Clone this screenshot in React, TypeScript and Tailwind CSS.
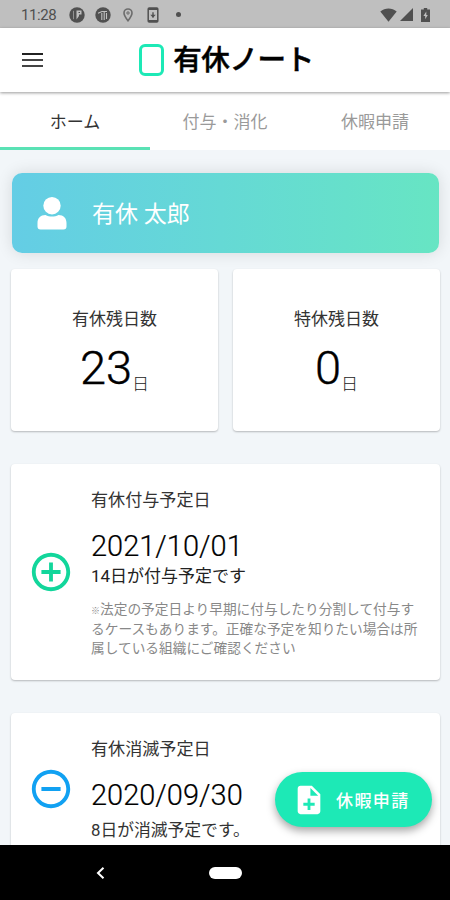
import React from 'react';
import { MdAddCircleOutline, MdNoteAdd, MdRemoveCircleOutline } from 'react-icons/md';

const StatusBar: React.FC = () => (
  <div className="h-7 shrink-0 bg-[#bfbfbf] text-[#505050] flex items-center justify-between pl-[21px] pr-[20px] pt-px">
    <div className="flex items-center">
      <span className="w-[48px] text-[15px] leading-none tracking-[-0.4px] pt-px">11:28</span>
      <svg className="w-4 h-4" viewBox="0 0 16 16">
        <circle cx="8" cy="8" r="7.7" fill="currentColor" />
        <path d="M4.5 3.8v8.4" stroke="#bfbfbf" strokeWidth="1" opacity=".6" />
        <path d="M7.5 3.5h5v4h-2.5v1.5l-2.5 3.5z" fill="#bfbfbf" />
        <path d="M9.5 5.5h1.5" stroke="currentColor" strokeWidth="1" />
      </svg>
      <svg className="w-4 h-4 ml-[10px]" viewBox="0 0 16 16">
        <circle cx="8" cy="8" r="7.7" fill="currentColor" />
        <path d="M3 6.2l4-1.7h5M6.8 6v7M9.2 5v8M11.5 6v6" stroke="#bfbfbf" strokeWidth="1.1" fill="none" />
      </svg>
      <svg className="w-[10px] h-[14px] ml-[12px]" viewBox="0 0 10 14" fill="none" stroke="currentColor">
        <path d="M5 12.8C2.5 9.6 1 7.3 1 5a4 4 0 0 1 8 0c0 2.3-1.5 4.6-4 7.8z" strokeWidth="1.6" opacity=".75" />
        <circle cx="5" cy="5" r="1.2" opacity=".75" />
      </svg>
      <svg className="w-3 h-4 ml-[14px]" viewBox="0 0 12 16" fill="none" stroke="currentColor">
        <rect x="1.2" y="1" width="9.6" height="14" rx="1" strokeWidth="1.5" />
        <path d="M1 2h10M1 14h10" strokeWidth="2" />
        <path d="M6 5.2v5.4" strokeWidth="1.4" />
        <path d="M3.3 7.8L6 10.8l2.7-3z" fill="currentColor" stroke="none" />
      </svg>
      <span className="w-[5px] h-[5px] rounded-full bg-[#505050] ml-[17px]"></span>
    </div>
    <div className="flex items-center">
      <svg className="w-[17px] h-[14px]" viewBox="0 0 17 14" fill="currentColor">
        <path d="M.3 3.5C5 -.5 12 -.5 16.7 3.5L8.5 13.8z" />
      </svg>
      <svg className="w-[13px] h-[13px] ml-[3px]" viewBox="0 0 13 13" fill="currentColor">
        <path d="M13 0v13H0z" />
      </svg>
      <svg className="w-[9px] h-[14px] ml-[8px]" viewBox="0 0 9 14">
        <path d="M2.8 0h3.4v1.5H9V14H0V1.5h2.8z" fill="currentColor" />
        <path d="M5.3 3.5L2.4 8h1.8v3.2L6.800 7H5.300z" fill="#bfbfbf" />
      </svg>
    </div>
  </div>
);

const Header: React.FC = () => (
  <header className="relative z-10 h-16 shrink-0 bg-white flex items-center justify-between pl-[22px] pr-[19px] shadow-[0_1px_3px_rgba(0,0,0,0.4)]">
    <button className="w-[21px] flex flex-col gap-[4px]">
      <span className="h-[2px] bg-[#222]"></span>
      <span className="h-[2px] bg-[#444]"></span>
      <span className="h-[2px] bg-[#444]"></span>
    </button>
    <h1 className="flex items-center gap-[9px]">
      <span className="w-[25px] h-[32px] rounded-[6px] border-[3.5px] border-[#1de9b6]"></span>
      <span className="pt-[3px] text-[28.5px] leading-none font-medium text-black tracking-[-0.4px] whitespace-nowrap [-webkit-text-stroke:0.5px_#000]">
        有休ノート
      </span>
    </h1>
    <span className="w-[21px]"></span>
  </header>
);

const tabs = [
  { label: 'ホーム', active: true },
  { label: '付与・消化', active: false },
  { label: '休暇申請', active: false },
];

const Tabs: React.FC = () => (
  <nav className="h-[58px] shrink-0 bg-white grid grid-cols-3">
    {tabs.map((tab) => (
      <button
        key={tab.label}
        className={`
          text-[17px] leading-none pt-[5px] border-b-[3px]
          ${tab.active ? 'text-[#333] border-[#5ae2b5]' : 'text-[#9a9a9a] border-transparent'}
        `}
      >
        {tab.label}
      </button>
    ))}
  </nav>
);

interface StatCardProps {
  title: string;
  days: number;
}

const StatCard: React.FC<StatCardProps> = ({ title, days }) => (
  <div className="h-[162px] bg-white rounded-[4px] shadow-[0_1px_2px_rgba(0,0,0,0.25)] flex flex-col items-center pt-[39px]">
    <h2 className="text-[17px] leading-[22px] text-[#333]">{title}</h2>
    <div className="flex items-baseline mt-[8px]">
      <span className="text-[47px] leading-[60px] font-light text-black [-webkit-text-stroke:0.4px_#000]">{days}</span>
      <span className="text-[17px] leading-none font-light text-[#222] relative top-[6px]">日</span>
    </div>
  </div>
);

interface ScheduleCardProps {
  icon: React.ReactNode;
  title: string;
  date: string;
  children: React.ReactNode;
}

const ScheduleCard: React.FC<ScheduleCardProps> = ({ icon, title, date, children }) => (
  <div className="h-[216px] shrink-0 bg-white rounded-[4px] shadow-[0_1px_2px_rgba(0,0,0,0.25)] flex">
    <div className="w-[80px] flex justify-center">{icon}</div>
    <div className="pt-[25px] whitespace-nowrap">
      <h2 className="text-[17.1px] leading-[22px] text-[#333]">{title}</h2>
      <p className="text-[29px] leading-[34px] font-light text-black mt-[18px] [-webkit-text-stroke:0.2px_#000]">{date}</p>
      {children}
    </div>
  </div>
);

const App: React.FC = () => {
  return (
    <div className="w-[450px] h-[900px] overflow-hidden flex flex-col bg-[#f2f6f9] font-['Roboto','Noto_Sans_CJK_JP',sans-serif]">
      <StatusBar />
      <Header />
      <Tabs />

      <main className="relative flex-1 min-h-0 overflow-hidden flex flex-col px-[11px]">
        {/* User */}
        <div className="h-[80px] shrink-0 ml-px mt-[22.5px] rounded-[10px] bg-linear-to-r from-[#64cde5] to-[#67e5c3] shadow-[0_0_16px_rgba(0,0,0,0.12)] flex items-center pl-[25px] text-white">
          <svg className="w-[30px] h-[33px] mt-px" viewBox="0 0 30 33" fill="currentColor">
            <circle cx="15" cy="8.7" r="8.7" />
            <path d="M8.5 18C3.5 18 .5 21 .5 26v3.5c0 2 1 3 3 3h23c2 0 3-1 3-3V26c0-5-3-8-8-8-4 2-9 2-13 0z" />
          </svg>
          <span className="ml-[25px] pt-[4px] text-[23px] leading-none">有休 太郎</span>
        </div>

        {/* Remaining days */}
        <div className="shrink-0 grid grid-cols-2 gap-[15px] mt-[16.5px] mr-[-1px]">
          <StatCard title="有休残日数" days={23} />
          <StatCard title="特休残日数" days={0} />
        </div>

        {/* Schedules */}
        <div className="flex flex-col gap-[33px] mt-[33px] mr-[-1px]">
          <ScheduleCard
            icon={<MdAddCircleOutline className="w-[46px] h-[46px] mt-[85px] text-[#12d69b]" />}
            title="有休付与予定日"
            date="2021/10/01"
          >
            <p className="text-[17px] leading-[24px] text-[#222] mt-px">14日が付与予定です</p>
            <p className="text-[13.7px] leading-[19.5px] text-[#888] mt-[12px]">
              <span className="inline-block w-[9px] text-[9px] leading-none">※</span>法定の予定日より早期に付与したり分割して付与す
              <br />
              るケースもあります。正確な予定を知りたい場合は所
              <br />
              属している組織にご確認ください
            </p>
          </ScheduleCard>
          <ScheduleCard
            icon={<MdRemoveCircleOutline className="w-[46px] h-[46px] mt-[52.5px] text-[#11a1f2]" />}
            title="有休消滅予定日"
            date="2020/09/30"
          >
            <p className="text-[16.8px] leading-[24px] text-[#333] mt-[6px]">8日が消滅予定です。</p>
          </ScheduleCard>
        </div>

        {/* Floating action button */}
        <button className="absolute right-[18px] bottom-[18px] w-[157px] h-[55px] rounded-full bg-[#1de9b6] text-white shadow-[0_4px_8px_rgba(0,0,0,0.35)] flex items-center pl-[17px]">
          <MdNoteAdd className="w-[34px] h-[34px]" />
          <span className="ml-[10px] pt-[3px] text-[17px] leading-none font-medium tracking-[1.4px]">休暇申請</span>
        </button>
      </main>

      {/* Navigation bar */}
      <div className="h-[55px] shrink-0 bg-black flex items-center pl-[96px]">
        <svg className="w-[9px] h-[12px]" viewBox="0 0 9 12" fill="none" stroke="#fff" strokeWidth="2">
          <path d="M7.5 .8L2 6l5.5 5.2" />
        </svg>
        <span className="w-[33px] h-[12px] ml-[104px] rounded-full bg-white"></span>
      </div>
    </div>
  );
};

export default App;
